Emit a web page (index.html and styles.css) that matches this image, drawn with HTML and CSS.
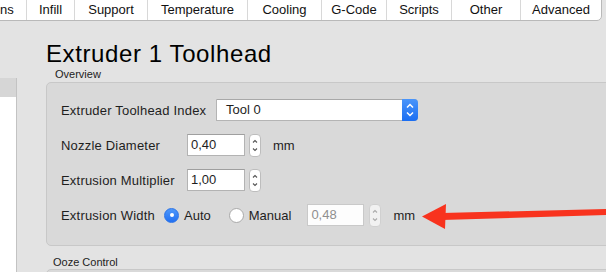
FILE: index.html
```html
<!DOCTYPE html>
<html lang="en">
<head>
  <meta charset="UTF-8" />
  <title>Extruder 1 Toolhead</title>
  <link rel="stylesheet" href="styles.css">
</head>
<body>
  <nav class="tabs">
    <a class="tab first">Additions</a>
    <a class="tab w-infill">Infill</a>
    <a class="tab w-support">Support</a>
    <a class="tab w-temp">Temperature</a>
    <a class="tab w-cooling">Cooling</a>
    <a class="tab w-gcode">G-Code</a>
    <a class="tab w-scripts">Scripts</a>
    <a class="tab w-other">Other</a>
    <a class="tab w-advanced">Advanced</a>
  </nav>

  <div class="window">
    <aside class="sidebar">
      <div class="sidebar-head"></div>
    </aside>

    <main class="content">
      <h1>Extruder 1 Toolhead</h1>

      <div class="group-label">Overview</div>
      <section class="group">
        <!-- Toolhead index -->
        <div class="row">
          <span class="label label-index">Extruder Toolhead Index</span>
          <div class="select">
            <span class="select-value">Tool 0</span>
            <span class="select-arrows">
              <svg width="16" height="22" viewBox="0 0 16 22">
                <path d="M5 8.5 L8 5.5 L11 8.5 M5 13.5 L8 16.5 L11 13.5" fill="none" stroke="#fff" stroke-width="1.5"/>
              </svg>
            </span>
          </div>
        </div>

        <!-- Nozzle diameter -->
        <div class="row">
          <span class="label label-mid">Nozzle Diameter</span>
          <span class="field">0,40</span>
          <span class="stepper">
            <svg width="12" height="23" viewBox="0 0 12 23">
              <path d="M4 8.5 L6 6.5 L8 8.5 M4 14.5 L6 16.5 L8 14.5" fill="none" stroke="#555" stroke-width="1.1"/>
            </svg>
          </span>
          <span class="unit">mm</span>
        </div>

        <!-- Extrusion multiplier -->
        <div class="row">
          <span class="label label-mid">Extrusion Multiplier</span>
          <span class="field">1,00</span>
          <span class="stepper">
            <svg width="12" height="23" viewBox="0 0 12 23">
              <path d="M4 8.5 L6 6.5 L8 8.5 M4 14.5 L6 16.5 L8 14.5" fill="none" stroke="#555" stroke-width="1.1"/>
            </svg>
          </span>
        </div>

        <!-- Extrusion width -->
        <div class="row">
          <span class="label label-width">Extrusion Width</span>
          <span class="radio checked"></span>
          <span class="radio-text">Auto</span>
          <span class="radio"></span>
          <span class="radio-text">Manual</span>
          <span class="field disabled">0,48</span>
          <span class="stepper disabled">
            <svg width="12" height="23" viewBox="0 0 12 23">
              <path d="M4 8.5 L6 6.5 L8 8.5 M4 14.5 L6 16.5 L8 14.5" fill="none" stroke="#aaa" stroke-width="1.1"/>
            </svg>
          </span>
          <span class="unit">mm</span>
        </div>
      </section>

      <div class="group-label ooze">Ooze Control</div>
      <section class="group"></section>
    </main>
  </div>

  <!-- annotation arrow -->
  <svg class="arrow" width="186" height="34" viewBox="0 0 186 34">
    <polygon points="22,13 186,9 186,15 22,20" fill="#f8331e"/>
    <polygon points="2,16.5 26,4 25,29" fill="#f8331e"/>
  </svg>
</body>
</html>
```

FILE: styles.css
```css
body {
  margin: 0;
  height: 272px;
  overflow: hidden;
  position: relative;
  font-family: "Liberation Sans", Arial, sans-serif;
  font-size: 13px;
  background-color: #e3e3e3;
  color: #1e1e1e;
}

/* tab bar */
.tabs {
  display: flex;
  width: fit-content;
  margin: -4px 0 0 -53px;
  background-color: #fff;
  border: 1px solid #b9b9b9;
  border-radius: 0 0 5px 5px;
}

.tab {
  box-sizing: border-box;
  height: 23px;
  padding-top: 3px;
  line-height: 20px;
  text-align: center;
  border-left: 1px solid #d8d8d8;
  color: #111;
}

.tab.first {
  width: 78px;
  border-left: none;
}

.w-infill { width: 48px; }
.w-support { width: 73px; }
.w-temp { width: 100px; }
.w-cooling { width: 74px; }
.w-gcode { width: 65px; }
.w-scripts { width: 65px; }
.w-other { width: 69px; }
.w-advanced { width: 81px; }

/* window body */
.window {
  display: flex;
}

.sidebar {
  box-sizing: border-box;
  width: 17px;
  height: 200px;
  margin-top: 57px;
  background-color: #fff;
  border-right: 1px solid #c3c3c3;
}

.sidebar-head {
  height: 19px;
  background-color: #d6d6d6;
}

.content {
  flex: 1;
  padding-left: 29px;
}

.content h1 {
  margin: 19px 0 0 0;
  font-size: 24px;
  line-height: 28px;
  font-weight: normal;
  letter-spacing: 0.6px;
  color: #000;
}

.group-label {
  padding-left: 9px;
  font-size: 11px;
  line-height: 13px;
  color: #222;
  margin-bottom: 1px;
}

.group-label.ooze {
  margin-top: 10px;
  padding-left: 7px;
  margin-bottom: 0;
}

.group {
  margin-right: -30px;
  padding: 16px 0 19px 14px;
  background-color: #d9d9d9;
  border: 1px solid #c8c8c8;
  border-radius: 5px;
  min-height: 30px;
}

.row {
  display: flex;
  align-items: center;
  height: 22px;
  margin-bottom: 13px;
}

.row:last-child {
  margin-bottom: 0;
}

.label {
  white-space: nowrap;
  letter-spacing: 0.2px;
}

.label-index { width: 155px; }
.label-mid { width: 126px; }
.label-width { width: 103px; }

/* popup button */
.select {
  display: flex;
  box-sizing: border-box;
  width: 202px;
  height: 22px;
  background-color: #fff;
  border: 1px solid #b4b4b4;
  border-top-color: #a8a8a8;
  border-radius: 0 4px 4px 0;
}

.select-value {
  flex: 1;
  padding-left: 9px;
  line-height: 20px;
}

.select-arrows {
  width: 16px;
  margin: -1px -1px -1px 0;
  border-radius: 0 4px 4px 0;
  background: linear-gradient(#4a95fa, #1b6ef2);
}

.select-arrows svg {
  display: block;
}

/* number fields */
.field {
  box-sizing: border-box;
  width: 58px;
  height: 22px;
  padding-left: 3px;
  line-height: 20px;
  background-color: #fff;
  border: 1px solid #b3b3b3;
  border-top-color: #9f9f9f;
}

.field.disabled {
  width: 57px;
  color: #8f8f8f;
  border-color: #c9c9c9;
  background-color: #fdfdfd;
}

.stepper {
  box-sizing: border-box;
  width: 12px;
  height: 23px;
  margin-left: 4px;
  background-color: #fff;
  border: 1px solid #bdbdbd;
  border-radius: 4px;
}

.stepper.disabled {
  margin-left: 5px;
  background-color: #f1f1f1;
  border-color: #d0d0d0;
}

.stepper svg {
  display: block;
  margin: -1px 0 0 -1px;
}

.unit {
  margin-left: 12px;
}

/* radio buttons */
.radio {
  box-sizing: border-box;
  width: 15px;
  height: 15px;
  margin-left: 1px;
  border-radius: 50%;
  background-color: #fff;
  border: 1px solid #a9a9a9;
  position: relative;
}

.radio.checked {
  margin-left: 0;
  background: linear-gradient(#4d97fa, #2270f2);
  border-color: #2a73e8;
}

.radio.checked::after {
  content: "";
  position: absolute;
  left: 4.5px;
  top: 4.5px;
  width: 4px;
  height: 4px;
  border-radius: 50%;
  background-color: #fff;
}

.radio-text {
  margin: 0 17px 0 5px;
}

.radio-text + .field {
  margin-left: -1px;
}

/* annotation */
.arrow {
  position: absolute;
  left: 420px;
  top: 200px;
}
```
